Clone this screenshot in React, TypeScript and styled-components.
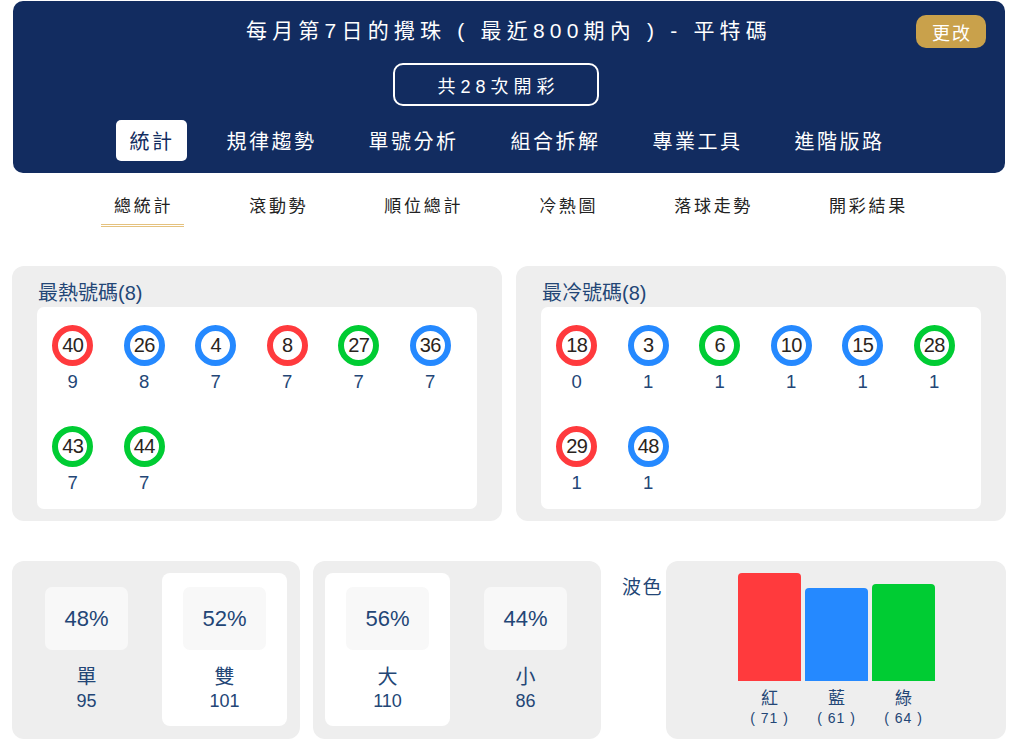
import React from "react";
import styled, { createGlobalStyle } from "styled-components";

const GlobalStyle = createGlobalStyle`
  html, body { margin: 0; padding: 0; background: #ffffff; }
  body { font-family: "Liberation Sans", "Noto Sans CJK TC", sans-serif; }
  * { box-sizing: border-box; }
`;

const NAVY = "#122c60";
const TEXT = "#234676";
const FONT = `"Liberation Sans", "Noto Sans CJK TC", sans-serif`;

const Page = styled.div`
  width: 1023px;
  padding: 1px 17px 0 12px;
  font-family: ${FONT};
`;

const Header = styled.header`
  background: ${NAVY};
  border-radius: 10px;
  margin-left: 1px;
  margin-right: 1px;
  padding: 13px 19px 12px 19px;
  display: flex;
  flex-direction: column;
  align-items: center;
`;

const TitleRow = styled.div`
  width: 100%;
  display: grid;
  grid-template-columns: 1fr auto 1fr;
  align-items: center;
  height: 33px;
`;

const Title = styled.h1`
  grid-column: 2;
  margin: 0 0 5px 0;
  color: #ffffff;
  font-size: 21px;
  font-weight: 400;
  letter-spacing: 5.2px;
  white-space: nowrap;
`;

const ChangeButton = styled.button`
  grid-column: 3;
  justify-self: end;
  width: 70px;
  height: 33px;
  border: none;
  border-radius: 10px;
  background: #c9a14b;
  color: #ffffff;
  font-family: ${FONT};
  font-size: 18px;
  letter-spacing: 2px;
  padding: 0 0 0 2px;
`;

const CountBox = styled.div`
  margin-top: 16px;
  margin-right: 26px;
  width: 206px;
  height: 43px;
  border: 2px solid #ffffff;
  border-radius: 10px;
  display: flex;
  align-items: center;
  justify-content: center;
  color: #ffffff;
  font-size: 18px;
  letter-spacing: 5px;
  padding-left: 5px;
`;

const MainTabs = styled.nav`
  margin-top: 14px;
  display: flex;
  gap: 26px;
  margin-left: -6px;
`;

const MainTab = styled.div<{ $active?: boolean }>`
  height: 41px;
  padding: 0 12px 0 14px;
  display: flex;
  align-items: center;
  border-radius: 5px;
  font-size: 20px;
  letter-spacing: 2.5px;
  background: ${(p) => (p.$active ? "#ffffff" : "transparent")};
  color: ${(p) => (p.$active ? NAVY : "#ffffff")};
`;

const SubTabs = styled.nav`
  margin-top: 24px;
  display: flex;
  justify-content: center;
  gap: 52px;
  padding-left: 2px;
`;

const SubTab = styled.div<{ $active?: boolean }>`
  padding: 0 11px 7px 13px;
  font-size: 17px;
  line-height: 20px;
  letter-spacing: 2.7px;
  color: #222222;
  border-bottom: 3px ${(p) => (p.$active ? "double #e5c27f" : "solid transparent")};
`;

const PanelRow = styled.section`
  margin-top: 39px;
  display: flex;
  gap: 14px;
`;

const NumberPanel = styled.div`
  width: 490px;
  background: #eeeeee;
  border-radius: 12px;
  padding: 16px 25px 12px 25px;
`;

const PanelTitle = styled.h2`
  margin: 0 0 3px 1px;
  font-size: 20px;
  line-height: 22px;
  font-weight: 400;
  color: ${TEXT};
`;

const BallBox = styled.div`
  background: #ffffff;
  border-radius: 7px;
  display: flex;
  flex-wrap: wrap;
  height: 202px;
  align-content: flex-start;
`;

const BallCell = styled.div`
  width: 71.5px;
  height: 101px;
  padding-top: 18px;
  display: flex;
  flex-direction: column;
  align-items: center;
`;

const Ball = styled.div<{ $color: string }>`
  width: 41px;
  height: 41px;
  border-radius: 50%;
  border: 6.5px solid ${(p) => p.$color};
  display: flex;
  align-items: center;
  justify-content: center;
  font-size: 20px;
  color: #2a2420;
  letter-spacing: -0.5px;
`;

const BallCount = styled.div`
  margin-top: 5px;
  font-size: 18.5px;
  line-height: 22px;
  color: ${TEXT};
`;

const BottomRow = styled.section`
  margin-top: 40px;
  display: flex;
  align-items: flex-start;
`;

const StatPanel = styled.div`
  width: 288px;
  height: 178px;
  background: #eeeeee;
  border-radius: 12px;
  padding: 12px;
  display: flex;
  gap: 13px;
  & + & { margin-left: 13px; }
`;

const StatCell = styled.div<{ $highlight?: boolean }>`
  width: 125px;
  height: 153px;
  border-radius: 8px;
  background: ${(p) => (p.$highlight ? "#ffffff" : "transparent")};
  padding-top: 14px;
  display: flex;
  flex-direction: column;
  align-items: center;
`;

const PercentBox = styled.div`
  width: 83px;
  height: 63px;
  border-radius: 7px;
  background: #f8f8f8;
  display: flex;
  align-items: center;
  justify-content: center;
  font-size: 22px;
  color: ${TEXT};
`;

const StatLabel = styled.div`
  margin-top: 15px;
  font-size: 20px;
  line-height: 24px;
  color: ${TEXT};
`;

const StatCount = styled.div`
  margin-top: 1px;
  font-size: 18px;
  line-height: 22px;
  color: ${TEXT};
`;

const WaveLabel = styled.div`
  width: 65px;
  padding: 15px 0 0 21px;
  font-size: 19px;
  line-height: 24px;
  letter-spacing: 1.5px;
  color: ${TEXT};
`;

const ChartPanel = styled.div`
  width: 340px;
  height: 178px;
  background: #eeeeee;
  border-radius: 12px;
  padding-top: 12px;
  display: flex;
  justify-content: center;
  gap: 4px;
  padding-left: 1px;
`;

const BarColumn = styled.div`
  width: 63px;
  display: flex;
  flex-direction: column;
  align-items: center;
`;

const BarTrack = styled.div`
  width: 100%;
  height: 108px;
  display: flex;
  align-items: flex-end;
`;

const Bar = styled.div<{ $color: string }>`
  width: 100%;
  background: ${(p) => p.$color};
  border-radius: 4px 4px 0 0;
`;

const BarName = styled.div`
  margin-top: 8px;
  font-size: 17px;
  line-height: 20px;
  color: ${TEXT};
`;

const BarValue = styled.div`
  margin-top: 1px;
  font-size: 14px;
  line-height: 16px;
  letter-spacing: 1px;
  color: ${TEXT};
  white-space: pre;
`;

const RED = "#ff3a3d";
const BLUE = "#2589ff";
const GREEN = "#00cc33";

const hot: [number, string, number][] = [
  [40, RED, 9],
  [26, BLUE, 8],
  [4, BLUE, 7],
  [8, RED, 7],
  [27, GREEN, 7],
  [36, BLUE, 7],
  [43, GREEN, 7],
  [44, GREEN, 7],
];

const cold: [number, string, number][] = [
  [18, RED, 0],
  [3, BLUE, 1],
  [6, GREEN, 1],
  [10, BLUE, 1],
  [15, BLUE, 1],
  [28, GREEN, 1],
  [29, RED, 1],
  [48, BLUE, 1],
];

const mainTabs = ["統計", "規律趨勢", "單號分析", "組合拆解", "專業工具", "進階版路"];
const subTabs = ["總統計", "滾動勢", "順位總計", "冷熱圖", "落球走勢", "開彩結果"];

const waves = [
  { name: "紅", value: 71, color: RED },
  { name: "藍", value: 61, color: BLUE },
  { name: "綠", value: 64, color: GREEN },
];
const maxWave = Math.max(...waves.map((w) => w.value));

function BallPanel({ title, items }: { title: string; items: [number, string, number][] }) {
  return (
    <NumberPanel>
      <PanelTitle>{title}</PanelTitle>
      <BallBox>
        {items.map(([n, c, k]) => (
          <BallCell key={n}>
            <Ball $color={c}>{n}</Ball>
            <BallCount>{k}</BallCount>
          </BallCell>
        ))}
      </BallBox>
    </NumberPanel>
  );
}

export default function App() {
  return (
    <Page>
      <GlobalStyle />
      <Header>
        <TitleRow>
          <Title>每月第7日的攪珠 ( 最近800期內 ) - 平特碼</Title>
          <ChangeButton>更改</ChangeButton>
        </TitleRow>
        <CountBox>共28次開彩</CountBox>
        <MainTabs>
          {mainTabs.map((t, i) => (
            <MainTab key={t} $active={i === 0}>
              {t}
            </MainTab>
          ))}
        </MainTabs>
      </Header>

      <SubTabs>
        {subTabs.map((t, i) => (
          <SubTab key={t} $active={i === 0}>
            {t}
          </SubTab>
        ))}
      </SubTabs>

      <PanelRow>
        <BallPanel title="最熱號碼(8)" items={hot} />
        <BallPanel title="最冷號碼(8)" items={cold} />
      </PanelRow>

      <BottomRow>
        <StatPanel>
          <StatCell>
            <PercentBox>48%</PercentBox>
            <StatLabel>單</StatLabel>
            <StatCount>95</StatCount>
          </StatCell>
          <StatCell $highlight>
            <PercentBox>52%</PercentBox>
            <StatLabel>雙</StatLabel>
            <StatCount>101</StatCount>
          </StatCell>
        </StatPanel>
        <StatPanel>
          <StatCell $highlight>
            <PercentBox>56%</PercentBox>
            <StatLabel>大</StatLabel>
            <StatCount>110</StatCount>
          </StatCell>
          <StatCell>
            <PercentBox>44%</PercentBox>
            <StatLabel>小</StatLabel>
            <StatCount>86</StatCount>
          </StatCell>
        </StatPanel>
        <WaveLabel>波色</WaveLabel>
        <ChartPanel>
          {waves.map((w) => (
            <BarColumn key={w.name}>
              <BarTrack>
                <Bar $color={w.color} style={{ height: `${(w.value / maxWave) * 108}px` }} />
              </BarTrack>
              <BarName>{w.name}</BarName>
              <BarValue>{`( ${w.value} )`}</BarValue>
            </BarColumn>
          ))}
        </ChartPanel>
      </BottomRow>
    </Page>
  );
}
